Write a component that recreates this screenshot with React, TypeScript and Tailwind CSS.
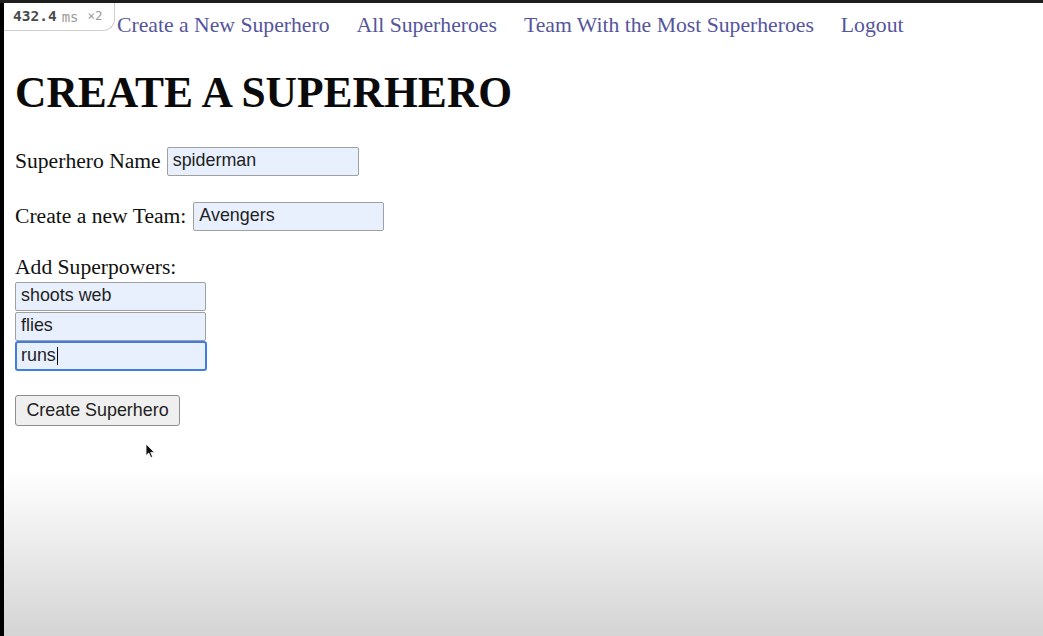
import React from "react";

const serif = "font-['Liberation_Serif','Times_New_Roman',serif]";
const sans = "font-['Liberation_Sans',Arial,sans-serif]";

function Field({ value, width = "w-[192px]" }: { value: string; width?: string }) {
  return (
    <div
      className={`${width} h-[29px] flex items-center px-[5px] bg-[#e8f0fe] border border-[#a0a0a0] rounded-[2px] ${sans} text-[17.9px] text-[#1f1f1f] leading-none`}
    >
      {value}
    </div>
  );
}

export default function App() {
  return (
    <div className="relative w-[1043px] h-[636px] overflow-hidden bg-black flex flex-col">
      <div className="h-[3px] bg-[#1e1e1e] shrink-0" />
      <div className="flex flex-1 min-h-0">
        <div className="w-[4px] bg-black shrink-0" />
        <main className="flex-1 bg-white pl-[11px]">
          <nav className={`h-[46px] flex items-center gap-[27px] pl-[102px] ${serif} text-[21.7px] leading-none text-[#55559c]`}>
            <span>Create a New Superhero</span>
            <span>All Superheroes</span>
            <span>Team With the Most Superheroes</span>
            <span>Logout</span>
          </nav>

          <h1 className={`mt-[19px] ${serif} text-[43.5px] font-bold leading-[48px] text-[#0a0a0a]`}>
            CREATE A SUPERHERO
          </h1>

          <div className={`${serif} text-[21.6px] text-[#111]`}>
            <div className="mt-[30px] h-[30px] flex items-center gap-[6px]">
              <span>Superhero Name</span>
              <Field value="spiderman" />
            </div>
            <div className="mt-[25px] h-[30px] flex items-center gap-[7px]">
              <span>Create a new Team:</span>
              <Field value="Avengers" width="w-[191px]" />
            </div>
            <div className="mt-[24px] h-[26px] flex items-center leading-none">Add Superpowers:</div>
            <div className="flex flex-col">
              <div className="h-[30px] flex items-center"><Field value="shoots web" width="w-[191px]" /></div>
              <div className="h-[30px] flex items-center"><Field value="flies" width="w-[191px]" /></div>
              <div className="h-[30px] flex items-center">
                <div className={`w-[192px] h-[30px] flex items-center px-[4px] bg-[#e8f0fe] border-2 border-[#3f7de0] rounded-[3px] ${sans} text-[17.9px] text-[#1f1f1f] leading-none`}>
                  runs<span className="inline-block w-[1px] h-[18px] bg-black ml-[1px]" />
                </div>
              </div>
            </div>
            <div className="mt-[24px]">
              <button className={`w-[165px] h-[31px] flex items-center justify-center bg-[#efefef] border border-[#8e8e8e] rounded-[3px] ${sans} text-[17.9px] text-[#222] leading-none`}>
                Create Superhero
              </button>
            </div>
          </div>
        </main>
      </div>

      {/* timing badge overlay */}
      <div className="absolute left-[4px] top-[3px] w-[111px] h-[28px] bg-white border border-t-0 border-l-0 border-[#cfcfcf] rounded-br-[12px] flex items-center pl-[9px] gap-[5px] font-['DejaVu_Sans_Mono',monospace]">
        <span className="text-[14.5px] font-bold text-[#4a4a4a] leading-none">432.4</span>
        <span className="text-[14px] text-[#9a9a9a] leading-none">ms</span>
        <span className="ml-[4px] text-[12.5px] text-[#9a9a9a] leading-none">×2</span>
      </div>

      {/* mouse cursor */}
      <svg className="absolute left-[145px] top-[443px]" width="11" height="16" viewBox="0 0 11 16">
        <path d="M1 1 L1 12.5 L3.8 10 L5.8 14.6 L7.6 13.8 L5.7 9.4 L9.4 9.4 Z" fill="#111" stroke="#fff" strokeWidth="0.8" />
      </svg>

      {/* video shade gradient */}
      <div className="absolute left-[4px] right-0 bottom-0 h-[166px] bg-gradient-to-b from-[rgba(0,0,0,0)] to-[rgba(0,0,0,0.17)] pointer-events-none" />
    </div>
  );
}
